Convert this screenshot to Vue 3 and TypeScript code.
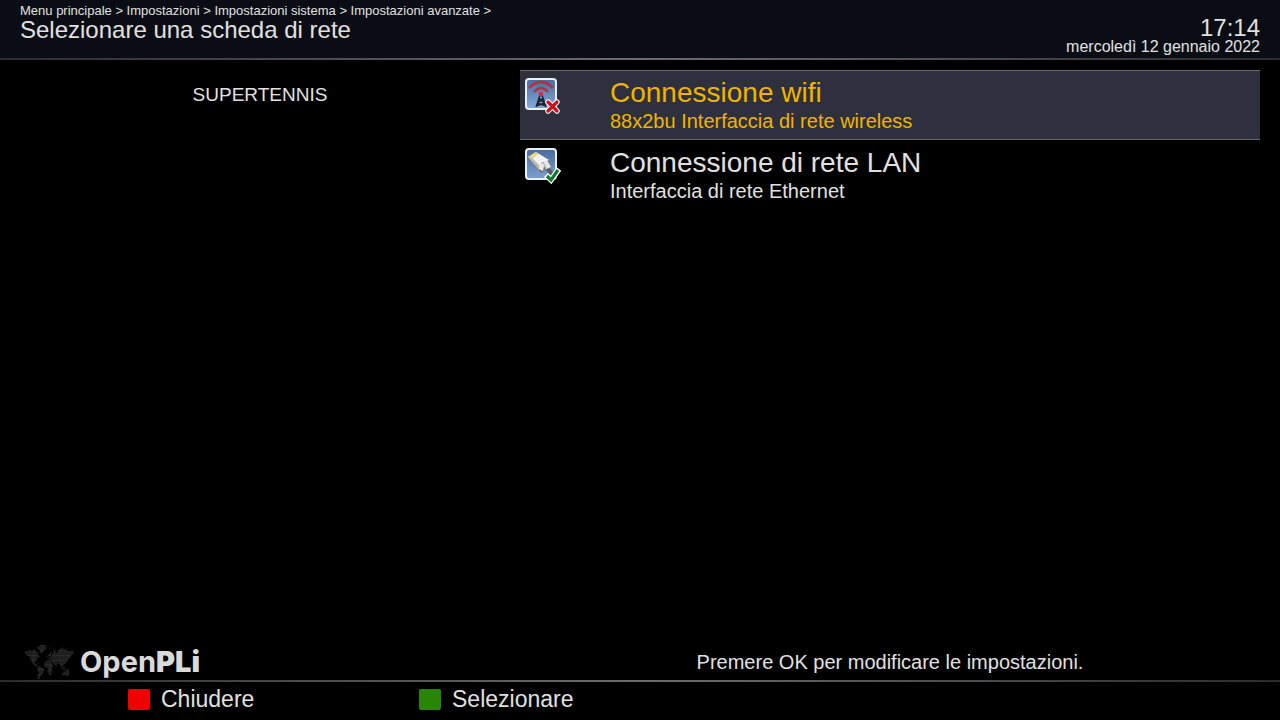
<script setup lang="ts">
import { ref } from 'vue'

interface Adapter {
  id: string
  name: string
  detail: string
  kind: 'wifi' | 'lan'
}

const crumbs: string[] = ['Menu principale', 'Impostazioni', 'Impostazioni sistema', 'Impostazioni avanzate']

const adapters: Adapter[] = [
  { id: 'wlan0', name: 'Connessione wifi', detail: '88x2bu Interfaccia di rete wireless', kind: 'wifi' },
  { id: 'eth0', name: 'Connessione di rete LAN', detail: 'Interfaccia di rete Ethernet', kind: 'lan' },
]

const selected = ref<string>('wlan0')

// Continents of the logo map, one string per row of dots.
const mapRows: string[] = [
  '..............#####...........................',
  '...........#.#######..........................',
  '............########..#...........#...........',
  '.............######.............###.#.........',
  '....##..##....####.........#..########........',
  '.##########...###.........##..##############..',
  '.############..#.......##.##################..',
  '..##########..........##.##################...',
  '...##########........###.#################....',
  '.....#########......#.#.##################....',
  '.....#######.........#.##################.....',
  '......######..........##.##############.......',
  '......#####.........#.#.###############.......',
  '.......###.........#####.#############........',
  '........##..#.....#######.####.######.........',
  '.........##.......#######..##...###...........',
  '..........##......########..#....##...........',
  '............###....#######.......#.#..........',
  '............#####....####.........##..........',
  '............######...####..........##.#.......',
  '............######...####............###......',
  '.............####....###.#.........#####......',
  '.............####.....##..........######......',
  '............####......##..........######......',
  '............###......................##.......',
  '............##................................',
  '............##................................',
]
const mapPath = mapRows
  .flatMap((row, y) => [...row].map((c, x) => (c === '#' ? `M${x} ${y}h.8v.8h-.8z` : '')))
  .join('')
</script>

<template>
  <div class="screen">
    <header class="top">
      <div class="heading">
        <nav class="crumbs"><span v-for="c in crumbs" :key="c">{{ c }} &gt; </span></nav>
        <h1>Selezionare una scheda di rete</h1>
      </div>
      <div class="clock">
        <time class="hour">17:14</time>
        <time class="date" datetime="2022-01-12">mercoledì 12 gennaio 2022</time>
      </div>
    </header>

    <main class="body">
      <aside class="channel">SUPERTENNIS</aside>
      <div class="list">
        <button
          v-for="a in adapters"
          :key="a.id"
          type="button"
          class="row"
          :class="{ active: selected === a.id }"
          @click="selected = a.id"
        >
          <svg v-if="a.kind === 'wifi'" class="icon" viewBox="0 0 38 38" aria-hidden="true">
            <defs>
              <linearGradient id="sky" x1="0" y1="0" x2="0" y2="1">
                <stop offset="0" stop-color="#4a6c9e" />
                <stop offset="1" stop-color="#86aada" />
              </linearGradient>
            </defs>
            <rect x="1" y="1" width="30" height="30" rx="3" fill="url(#sky)" stroke="#e8f0fa" stroke-width="2" />
            <g fill="none" stroke="#b03446">
              <path d="M4 10Q16 -2 28 10" stroke-width="2.8" />
              <path d="M9 14Q16 6 23 14" stroke-width="2.4" />
            </g>
            <path d="M15 17L11 29M17 17L21 29M14 20L20 26M18 20L12 26M13 23H19M11 28L20 25M21 28L12 25" fill="none" stroke="#1b2430" stroke-width="1.4" />
            <circle cx="16" cy="16" r="2.3" fill="#ee2634" />
            <path d="M23 24L32 33M32 24L23 33" stroke="#fff" stroke-width="5.4" stroke-linecap="round" />
            <path d="M23 24L32 33M32 24L23 33" stroke="#c9151b" stroke-width="3.4" stroke-linecap="round" />
          </svg>
          <svg v-else class="icon" viewBox="0 0 38 38" aria-hidden="true">
            <defs>
              <linearGradient id="sea" x1="0" y1="0" x2="0" y2="1">
                <stop offset="0" stop-color="#486a9c" />
                <stop offset="1" stop-color="#7ba0d0" />
              </linearGradient>
            </defs>
            <rect x="1" y="1" width="30" height="30" rx="3" fill="url(#sea)" stroke="#e8f0fa" stroke-width="2" />
            <path d="M22 21Q26 23 28 29" fill="none" stroke="#555b62" stroke-width="4" />
            <path d="M3 10L13 22L17 25L20 22L26 20L24 13L12 5Z" fill="#77777a" />
            <path d="M3 9L11 4L24 12L16 16L14 21Z" fill="#f3f2ec" />
            <path d="M3 9L5 8L15 18L14 22Z" fill="#b9b9b4" />
            <path d="M14 17L22 12L26 19L21 21L19 18L18 23L14 21Z" fill="#e8e8e4" />
            <path d="M16 16L18 14L21 20" fill="none" stroke="#a6a6a4" stroke-width="1" />
            <path d="M4 9L10 4L13 6L8 10Z" fill="#e9c66e" />
            <path d="M6 9L10 6" stroke="#fff4bd" stroke-width="1" />
            <path d="M21 27L26 32L34 21" fill="none" stroke="#fff" stroke-width="5.6" />
            <path d="M22 28L26 32L33 22" fill="none" stroke="#117a2b" stroke-width="3.2" />
          </svg>
          <span class="labels">
            <span class="name">{{ a.name }}</span>
            <span class="detail">{{ a.detail }}</span>
          </span>
        </button>
      </div>
    </main>

    <section class="info">
      <div class="brand">
        <svg class="map" viewBox="0 0 46 27" preserveAspectRatio="none" aria-hidden="true">
          <path :d="mapPath" fill="#343434" />
        </svg>
        <span class="word">Open<b>PLi</b></span>
      </div>
      <p class="hint">Premere OK per modificare le impostazioni.</p>
    </section>

    <footer class="keys">
      <button type="button" class="key"><i class="swatch red"></i>Chiudere</button>
      <button type="button" class="key"><i class="swatch green"></i>Selezionare</button>
    </footer>
  </div>
</template>

<style>
body {
  background: #000;
}
</style>

<style scoped>
.screen {
  display: flex;
  flex-direction: column;
  min-height: 100vh;
  background: #000;
  color: #e0e0e0;
  font-family: "Liberation Sans", Arial, sans-serif;
}
button {
  margin: 0;
  border: 0;
  background: none;
  color: inherit;
  font-family: inherit;
  text-align: left;
  cursor: pointer;
}
.top {
  display: flex;
  justify-content: space-between;
  padding: 4px 20px;
  background: #0b0d15;
  border-bottom: 2px solid;
  border-image: linear-gradient(90deg, #2c2c30, #6c6c70 50%, #2c2c30) 1;
}
.crumbs {
  font-size: 13px;
  line-height: 14px;
}
h1 {
  margin: 0;
  font-size: 24px;
  font-weight: 400;
  line-height: 24px;
}
.clock {
  display: flex;
  flex-direction: column;
  align-items: flex-end;
  padding-top: 12px;
}
.hour {
  font-size: 24px;
  line-height: 24px;
}
.date {
  font-size: 16px;
  line-height: 14px;
}
.body {
  flex: 1;
  display: grid;
  grid-template-columns: 480px 1fr;
  column-gap: 20px;
  padding: 10px 20px;
}
.channel {
  padding-top: 15px;
  font-size: 19px;
  line-height: 20px;
  text-align: center;
}
.row {
  display: flex;
  gap: 47px;
  width: 100%;
  height: 70px;
  padding: 7px 5px;
  border: solid transparent;
  border-width: 1px 0;
}
.row.active {
  background: #2f303d;
  border-color: #66666b;
  color: #f0b400;
}
.icon {
  flex: none;
  width: 38px;
  height: 38px;
}
.labels {
  display: flex;
  flex-direction: column;
}
.name {
  font-size: 28px;
  line-height: 30px;
}
.detail {
  font-size: 20px;
  line-height: 26px;
}
.info {
  display: grid;
  grid-template-columns: 480px 1fr;
  column-gap: 20px;
  padding: 0 20px;
}
.brand {
  display: flex;
  align-items: center;
  gap: 4px;
  padding-left: 4px;
}
.map {
  width: 52px;
  height: 34px;
}
.word {
  color: #dadada;
  font-family: Inter, Lato, sans-serif;
  font-size: 29px;
  font-weight: 700;
  line-height: 36px;
}
.word b {
  font-weight: 900;
}
.hint {
  margin: 0;
  font-size: 20px;
  line-height: 36px;
  text-align: center;
}
.keys {
  display: flex;
  height: 34px;
  padding: 0 0 4px 128px;
  border-top: 2px solid;
  border-image: linear-gradient(90deg, #2c2c30, #6c6c70 50%, #2c2c30) 1;
}
.key {
  display: flex;
  align-items: center;
  gap: 11px;
  width: 291px;
  padding: 0;
  font-size: 23px;
  line-height: 26px;
}
.swatch {
  width: 22px;
  height: 21px;
  border-radius: 2px;
}
.red {
  background: #f00000;
}
.green {
  background: #278605;
}
</style>
